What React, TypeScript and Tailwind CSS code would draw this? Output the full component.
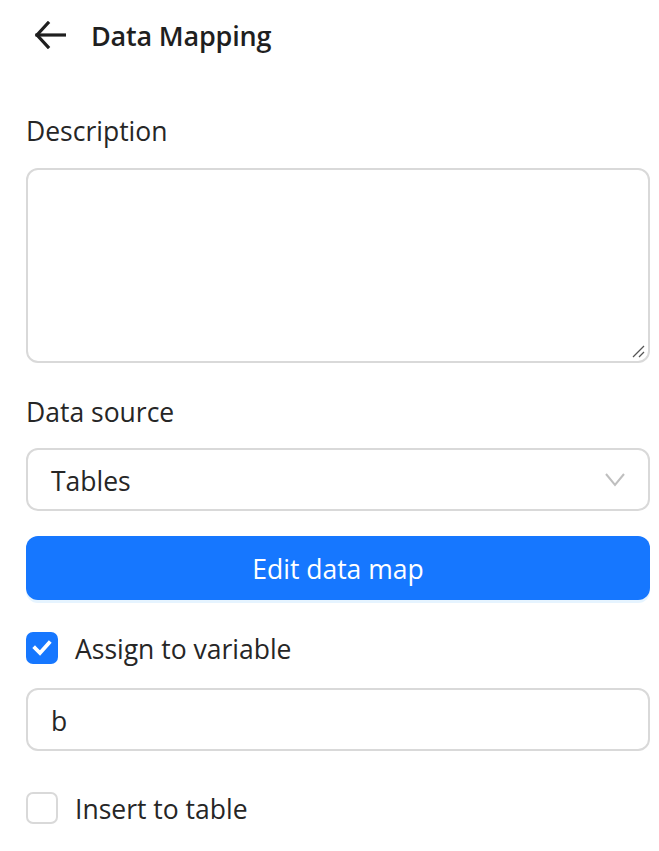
import React from "react";

export default function App() {
  const font = { fontFamily: '"Open Sans", "Noto Sans", sans-serif' };
  return (
    <div className="w-[659px] h-[851px] bg-white text-[#1f1f1f]" style={font}>
      <div className="pl-[26px] w-[650px]">
        {/* Header */}
        <div className="flex items-center h-[70px] pl-[8px]">
          <svg width="32" height="28" viewBox="0 0 32 28" fill="none" stroke="#1f1f1f" strokeWidth="3.2" strokeLinecap="square">
            <path d="M3 14 H31" />
            <path d="M14 2 L3 14 L14 26" strokeLinejoin="miter" />
          </svg>
          <div className="ml-[25px] pt-[2px] text-[27px] font-semibold tracking-[-0.2px] text-[#1f1f1f]">Data Mapping</div>
        </div>

        {/* Description */}
        <div className="mt-[41px] text-[26.5px] leading-[40px] text-[#262626]">Description</div>
        <div className="mt-[17px] relative h-[195px] rounded-[12px] border-2 border-[#d9d9d9]">
          <svg className="absolute right-[3px] bottom-[3px]" width="14" height="14" viewBox="0 0 14 14" stroke="#555" strokeWidth="1.3">
            <path d="M2 13 L13 2" />
            <path d="M8 13 L13 8" />
          </svg>
        </div>

        {/* Data source */}
        <div className="mt-[29px] text-[26.5px] leading-[40px] text-[#262626]">Data source</div>
        <div className="mt-[16px] h-[63px] rounded-[12px] border-2 border-[#d9d9d9] flex items-center justify-between pl-[23px] pr-[22px]">
          <span className="pt-[4px] text-[26.5px] text-[#262626]">Tables</span>
          <svg width="22" height="16" viewBox="0 0 22 16" fill="none" stroke="#bfbfbf" strokeWidth="2">
            <path d="M2 2 L11 13 L20 2" />
          </svg>
        </div>

        {/* Button */}
        <button className="mt-[25px] w-full h-[64px] pt-[4px] rounded-[12px] bg-[#1677ff] text-white text-[26.5px] shadow-[0_3px_0_#e6f4ff] flex items-center justify-center">
          Edit data map
        </button>

        {/* Assign to variable */}
        <div className="mt-[32px] flex items-center h-[32px]">
          <div className="w-[32px] h-[32px] rounded-[7px] bg-[#1677ff] flex items-center justify-center">
            <svg width="20" height="16" viewBox="0 0 20 16" fill="none" stroke="white" strokeWidth="3.8" strokeLinecap="square">
              <path d="M3 8 L8 13 L17 3" />
            </svg>
          </div>
          <span className="ml-[17px] pt-[4px] text-[26.5px] text-[#262626]">Assign to variable</span>
        </div>

        <div className="mt-[24px] h-[63px] rounded-[12px] border-2 border-[#d9d9d9] flex items-center pl-[23px]">
          <span className="pt-[4px] text-[26.5px] text-[#262626]">b</span>
        </div>

        {/* Insert to table */}
        <div className="mt-[41px] flex items-center h-[32px]">
          <div className="w-[32px] h-[32px] rounded-[7px] border-2 border-[#d9d9d9] bg-white" />
          <span className="ml-[17px] pt-[4px] text-[26.5px] text-[#262626]">Insert to table</span>
        </div>
      </div>
    </div>
  );
}
